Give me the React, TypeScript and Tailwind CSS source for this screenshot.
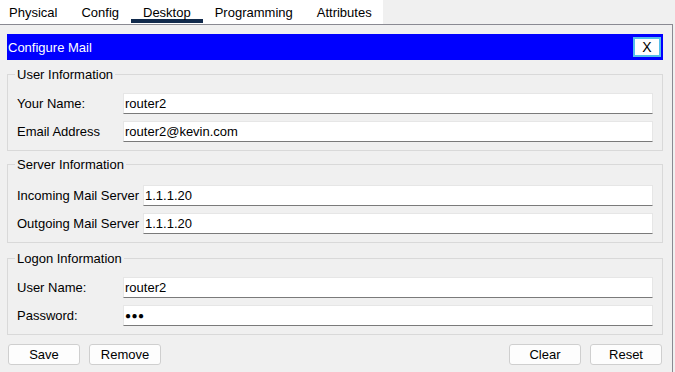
import React from 'react';

const tabs = ['Physical', 'Config', 'Desktop', 'Programming', 'Attributes'];

interface FieldProps {
  label: string;
  value: string;
  labelWidth: string;
  password?: boolean;
}

const Field: React.FC<FieldProps> = ({ label, value, labelWidth, password }) => (
  <div className="flex items-center h-[21px]">
    <label className={`${labelWidth} shrink-0 leading-[15px]`}>{label}</label>
    <input
      type="text"
      defaultValue={password ? '●●●' : value}
      className={`flex-1 h-[21px] bg-white border border-[#e6e6e6] border-b-[#7a7a7a] px-[1px] leading-[15px] text-black outline-none ${
        password ? 'text-[10px] tracking-[0.5px]' : 'text-[13px]'
      }`}
    />
  </div>
);

interface GroupProps {
  title: string;
  className: string;
  children: React.ReactNode;
}

const Group: React.FC<GroupProps> = ({ title, className, children }) => (
  <fieldset className={`border border-[#d9d9d9] pl-[9px] pr-[9px] pb-[8px] ${className}`}>
    <legend className="-ml-[2px] px-[2px] leading-[15px]">{title}</legend>
    <div className="flex flex-col gap-[7px]">{children}</div>
  </fieldset>
);

const Btn: React.FC<{ label: string }> = ({ label }) => (
  <button className="w-[72px] h-[21px] bg-[#fdfdfd] border border-[#cfcfcf] rounded-[3px] text-[13px] leading-[15px] text-black">
    {label}
  </button>
);

export default function App() {
  return (
    <div
      className="w-[675px] h-[372px] overflow-hidden bg-[#f0f0f0] text-[13px] leading-[15px] text-black"
      style={{ fontFamily: '"Liberation Sans", Arial, sans-serif' }}
    >
      <div className="w-[383px] h-[24px] bg-white">
        <div className="flex -ml-[3px]">
          {tabs.map((t) => (
            <div
              key={t}
              className={`h-[23px] px-[12px] pt-[5px] ${t === 'Desktop' ? 'border-b-4 border-[#112a4c]' : ''}`}
            >
              {t}
            </div>
          ))}
        </div>
      </div>

      <div className="w-[673px] h-[348px] border-t border-r border-[#8a8a92] pl-[7px] pr-[9px]">
        <div className="mt-[9px] h-[26px] bg-[#0000ff] flex items-center justify-between pl-[1px] pr-[2px]">
          <span className="text-white">Configure Mail</span>
          <button className="w-[28px] h-[20px] bg-white border-2 border-[#55bfe9] text-[14px] leading-[15px] text-black">
            X
          </button>
        </div>

        <Group title="User Information" className="mt-[7px] pt-[11px]">
          <Field label="Your Name:" value="router2" labelWidth="w-[106px]" />
          <Field label="Email Address" value="router2@kevin.com" labelWidth="w-[106px]" />
        </Group>

        <Group title="Server Information" className="mt-[6px] pt-[13px]">
          <Field label="Incoming Mail Server" value="1.1.1.20" labelWidth="w-[126px]" />
          <Field label="Outgoing Mail Server" value="1.1.1.20" labelWidth="w-[126px]" />
        </Group>

        <Group title="Logon Information" className="mt-[8px] pt-[11px]">
          <Field label="User Name:" value="router2" labelWidth="w-[106px]" />
          <Field label="Password:" value="abc" labelWidth="w-[106px]" password />
        </Group>

        <div className="mt-[9px] flex justify-between px-[1px]">
          <div className="flex gap-[9px]">
            <Btn label="Save" />
            <Btn label="Remove" />
          </div>
          <div className="flex gap-[9px]">
            <Btn label="Clear" />
            <Btn label="Reset" />
          </div>
        </div>
      </div>
    </div>
  );
}
